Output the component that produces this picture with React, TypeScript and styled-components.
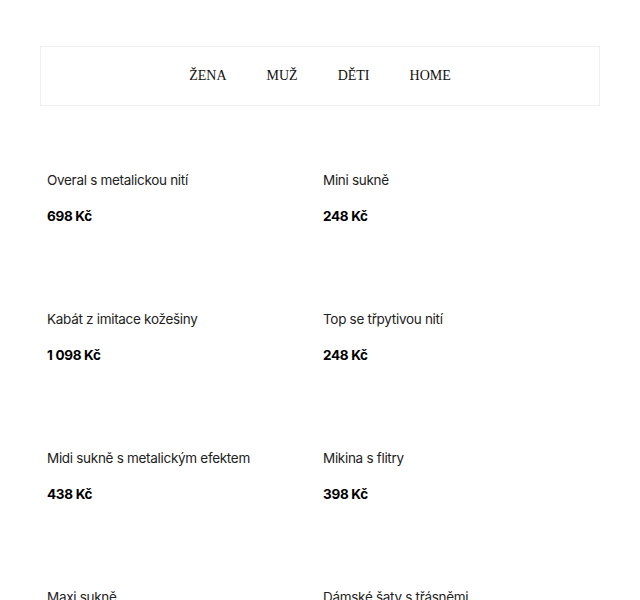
import React from 'react';
import styled, {createGlobalStyle} from 'styled-components';

const GlobalStyle = createGlobalStyle`
	body {
		margin: 0;
		background: #ffffff;
	}
`;

const Page = styled.div`
	padding: 46px 40px 0;
	overflow: hidden;
	height: 600px;
	box-sizing: border-box;
`;

const Nav = styled.nav`
	height: 60px;
	border: 1px solid #eeeeee;
	box-sizing: border-box;
	display: flex;
	justify-content: center;
	align-items: center;
	gap: 40px;
`;

const NavLink = styled.a`
	font-family: "Liberation Serif", "Times New Roman", serif;
	font-size: 14px;
	color: #111111;
	text-decoration: none;
`;

const Grid = styled.div`
	display: grid;
	grid-template-columns: 276px 276px;
	padding-left: 7px;
`;

const Card = styled.div`
	padding: 64px 0 19px;
	display: flex;
	flex-direction: column;
	gap: 16px;
`;

const Title = styled.div`
	font-family: Inter, "Noto Sans", sans-serif;
	font-size: 13.5px;
	letter-spacing: -0.3px;
	line-height: 20px;
	color: #222222;
`;

const Price = styled.div`
	font-family: Inter, "Noto Sans", sans-serif;
	font-size: 13.5px;
	font-weight: 700;
	letter-spacing: -0.3px;
	line-height: 20px;
	color: #000000;
`;

const navItems = ['ŽENA', 'MUŽ', 'DĚTI', 'HOME'];

const products = [
	{name: 'Overal s metalickou nití', price: '698 Kč'},
	{name: 'Mini sukně', price: '248 Kč'},
	{name: 'Kabát z imitace kožešiny', price: '1 098 Kč'},
	{name: 'Top se třpytivou nití', price: '248 Kč'},
	{name: 'Midi sukně s metalickým efektem', price: '438 Kč'},
	{name: 'Mikina s flitry', price: '398 Kč'},
	{name: 'Maxi sukně', price: '598 Kč'},
	{name: 'Dámské šaty s třásněmi', price: '798 Kč'},
];

const App = () => {
	return (
		<Page>
			<GlobalStyle/>
			<Nav>
				{navItems.map(item => <NavLink key={item} href="#">{item}</NavLink>)}
			</Nav>
			<Grid>
				{products.map(p => (
					<Card key={p.name}>
						<Title>{p.name}</Title>
						<Price>{p.price}</Price>
					</Card>
				))}
			</Grid>
		</Page>
	);
};

export default App;
